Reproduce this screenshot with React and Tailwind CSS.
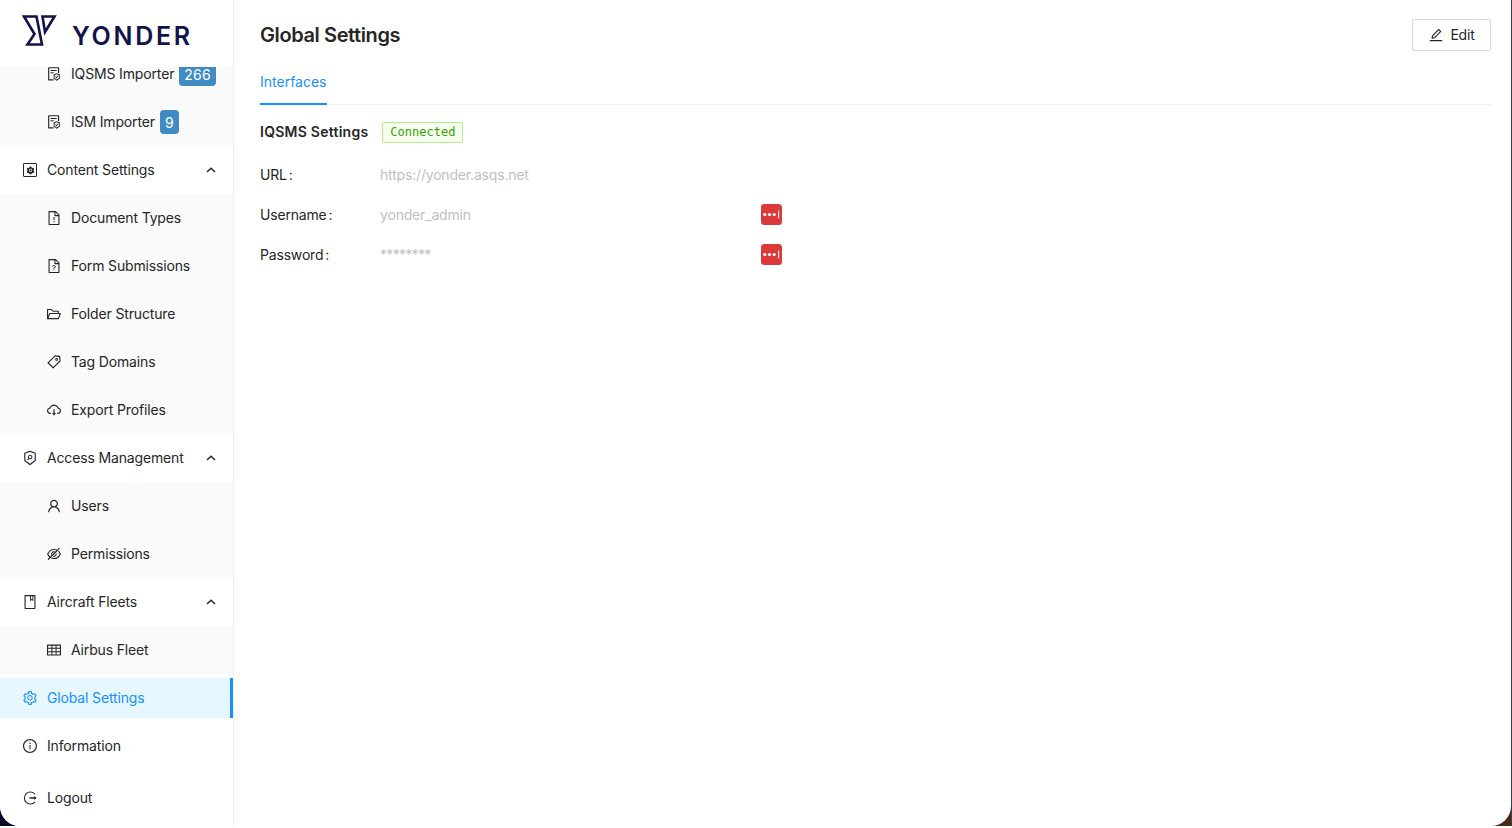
import React from "react";
import {
  AiOutlineBook,
  AiOutlineCloudDownload,
  AiOutlineEdit,
  AiOutlineEyeInvisible,
  AiOutlineFileExclamation,
  AiOutlineFileProtect,
  AiOutlineFileUnknown,
  AiOutlineFolderOpen,
  AiOutlineInfoCircle,
  AiOutlineSecurityScan,
  AiOutlineSetting,
  AiFillSetting,
  AiOutlineTable,
  AiOutlineTag,
  AiOutlineUser,
} from "react-icons/ai";

/* ---------- Drawn icons ---------- */
const Logo = () => (
  <svg width="36" height="33" viewBox="0 0 36 33" fill="none" stroke="#14124a" strokeWidth="2.6" className="shrink-0">
    <path d="M3 2.5 H15.5 L21 30.5 H6.5 L13.5 20 Z" strokeLinejoin="miter" />
    <path d="M21.5 2.5 H33.5 L24 18 Z" strokeLinejoin="miter" />
  </svg>
);

const Chevron = () => (
  <svg width="10" height="6" viewBox="0 0 10 6" fill="none" stroke="#262626" strokeWidth="1.5" className="ml-auto mr-[17px]">
    <path d="M1 5 L5 1.2 L9 5" />
  </svg>
);

const BoxGear = () => (
  <span className="ml-px flex h-[14px] w-[14px] items-center justify-center rounded-[1px] border-[1.5px] border-[#262626]">
    <AiFillSetting className="text-[9px]" />
  </span>
);

const LogoutIcon = () => (
  <svg width="16" height="16" viewBox="0 0 16 16" fill="none" stroke="#262626" strokeWidth="1.1">
    <path d="M13 4.2 A6 6 0 1 0 13 11.8" />
    <path d="M7.5 8 H14" strokeWidth="1.3" />
    <path d="M12.3 6.6 L14.2 8 L12.3 9.4 Z" fill="#262626" strokeWidth="0.5" />
  </svg>
);

const KeyTile = () => (
  <svg width="21" height="21" viewBox="0 0 21 21">
    <rect width="21" height="21" rx="3.5" fill="#dc3a3a" />
    <circle cx="3.8" cy="10.5" r="1.6" fill="#fff" />
    <circle cx="8.5" cy="10.5" r="1.6" fill="#fff" />
    <circle cx="13.2" cy="10.5" r="1.6" fill="#fff" />
    <rect x="17" y="6.5" width="1.2" height="8" fill="#fff" opacity="0.85" />
  </svg>
);

/* ---------- Sidebar ---------- */
const Badge = ({ children }) => (
  <span className="ml-[5px] flex h-[24px] min-w-[19px] items-center justify-center rounded-[4px] bg-[#3f8bc4] px-[5px] text-[14px] tracking-[0.3px] text-white">
    {children}
  </span>
);

const SubItem = ({ icon, label, badge }) => (
  <div className="py-1">
    <div className="flex h-10 items-center pl-[46px] text-[#262626]">
      <span className="flex w-[25px] shrink-0 text-[16px]">{icon}</span>
      <span className="pb-[2px]">{label}</span>
      {badge && <Badge>{badge}</Badge>}
    </div>
  </div>
);

const TopItem = ({ icon, label, open, active }) => (
  <div className="py-1">
    <div
      className={`flex h-10 items-center pl-[22px] ${
        active ? "border-r-[3px] border-[#1890ff] bg-[#e6f7ff] text-[#1890ff]" : "text-[#262626]"
      }`}
    >
      <span className="flex w-[25px] shrink-0 text-[16px]">{icon}</span>
      <span className="pb-[2px]">{label}</span>
      {open && <Chevron />}
    </div>
  </div>
);

const Sidebar = () => (
  <aside className="flex w-[234px] shrink-0 flex-col overflow-hidden border-r border-[#f0f0f0] bg-white text-[14px] tracking-[-0.15px]">
    <div className="flex h-[67px] shrink-0 items-start pl-[21px] pt-[14px]">
      <Logo />
      <span className="ml-[15px] mt-[6px] text-[25px] font-semibold leading-[32px] tracking-[2.7px] text-[#14124a]">
        YONDER
      </span>
    </div>

    <div className="flex-1 overflow-hidden">
      <div className="mt-[-17px] bg-[#fafafa]">
        <SubItem icon={<AiOutlineFileProtect />} label="IQSMS Importer" badge="266" />
        <SubItem icon={<AiOutlineFileProtect />} label="ISM Importer" badge="9" />
      </div>

      <TopItem icon={<BoxGear />} label="Content Settings" open />
      <div className="bg-[#fafafa]">
        <SubItem icon={<AiOutlineFileExclamation />} label="Document Types" />
        <SubItem icon={<AiOutlineFileUnknown />} label="Form Submissions" />
        <SubItem icon={<AiOutlineFolderOpen />} label="Folder Structure" />
        <SubItem icon={<AiOutlineTag />} label="Tag Domains" />
        <SubItem icon={<AiOutlineCloudDownload />} label="Export Profiles" />
      </div>

      <TopItem icon={<AiOutlineSecurityScan />} label="Access Management" open />
      <div className="bg-[#fafafa]">
        <SubItem icon={<AiOutlineUser />} label="Users" />
        <SubItem icon={<AiOutlineEyeInvisible />} label="Permissions" />
      </div>

      <TopItem icon={<AiOutlineBook />} label="Aircraft Fleets" open />
      <div className="bg-[#fafafa]">
        <SubItem icon={<AiOutlineTable />} label="Airbus Fleet" />
      </div>

      <TopItem icon={<AiOutlineSetting />} label="Global Settings" active />
      <TopItem icon={<AiOutlineInfoCircle />} label="Information" />
      <div className="mt-1">
        <TopItem icon={<LogoutIcon />} label="Logout" />
      </div>
    </div>
  </aside>
);

/* ---------- Settings ---------- */
const Field = ({ label, value, action, masked }) => (
  <div className="flex h-10 items-center">
    <span className="flex w-[120px] shrink-0 text-[#262626]">
      {label}
      <span className="ml-[2px]">:</span>
    </span>
    <span className={`w-[381px] shrink-0 text-[#bfbfbf] ${masked ? "tracking-[-0.7px]" : ""}`}>{value}</span>
    {action && <KeyTile />}
  </div>
);

export default function App() {
  return (
    <div className="h-[828px] w-[1512px] overflow-hidden bg-white font-['Inter',sans-serif]">
      <div className="h-[826px] border-r border-[#2b4557] bg-gradient-to-r from-[#08082a] to-[#4a2a17]">
        <div className="flex h-[826px] overflow-hidden rounded-b-[20px] bg-white">
          <Sidebar />

          <main className="min-w-0 flex-1 pl-[26px] pr-[20px] text-[14px] tracking-[-0.18px]">
            <div className="flex h-[70px] items-center justify-between">
              <h1 className="text-[20px] font-semibold tracking-[-0.4px] text-[#262626]">Global Settings</h1>
              <button className="flex h-[32px] w-[79px] items-center justify-center gap-[6px] rounded-[2px] border border-[#d9d9d9] pb-px text-[#262626]">
                <AiOutlineEdit className="text-[16px]" />
                Edit
              </button>
            </div>

            <div className="flex h-[35px] border-b border-[#f0f0f0]">
              <div className="h-[35px] border-b-2 border-[#1890ff] pt-[1px] leading-[22px] tracking-normal text-[#1890ff]">
                Interfaces
              </div>
            </div>

            <div className="mt-[17px] flex h-[21px] items-center">
              <span className="pb-[2px] font-semibold tracking-[0.25px] text-[#262626]">IQSMS Settings</span>
              <span className="ml-[14px] flex h-[21px] w-[81px] items-center justify-center rounded-[2px] border border-[#b7eb8f] bg-[#f6ffed] pb-[2px] font-['DejaVu_Sans_Mono',monospace] text-[12px] tracking-normal text-[#389e0d]">
                Connected
              </span>
            </div>

            <div className="mt-[11px]">
              <Field label="URL" value="https://yonder.asqs.net" />
              <Field label="Username" value="yonder_admin" action />
              <Field label="Password" value="********" action masked />
            </div>
          </main>
        </div>
      </div>
    </div>
  );
}
